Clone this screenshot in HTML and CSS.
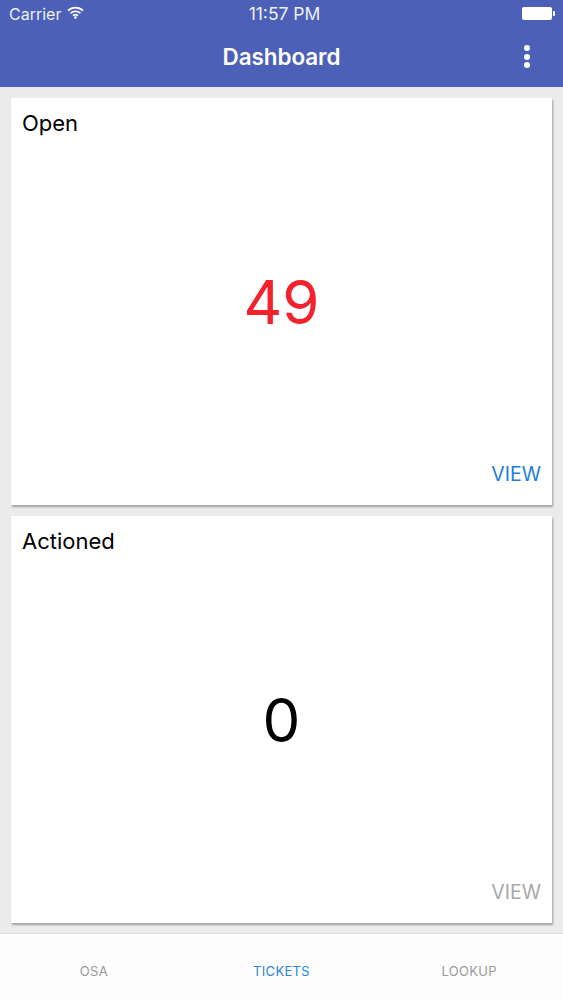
FILE: index.html
```html
<!DOCTYPE html>
<html lang="en">
<head>
<meta charset="utf-8">
<title>Dashboard</title>
<link rel="stylesheet" href="styles.css">
</head>
<body>
<div class="app">
  <header class="header">
    <div class="status">
      <div class="status-left">
        <span>Carrier</span>
        <svg class="wifi" width="17" height="13" viewBox="0 0 17 13"><path d="M1 4.600C5.300.6 11.700.6 16 4.600" class="arc"/><path d="M3.600 7.200c2.900-2.600 6.900-2.600 9.800 0" class="arc"/><path d="M6 9.600c1.500-1.200 3.500-1.200 5 0" class="arc"/><circle cx="8.500" cy="11.500" r="1.300" class="dot"/></svg>
      </div>
      <div class="status-time">11:57 PM</div>
      <div class="status-right">
        <span class="battery"></span><span class="battery-tip"></span>
      </div>
    </div>
    <div class="titlebar">
      <h1 class="title">Dashboard</h1>
      <div class="more"><i></i><i></i><i></i></div>
    </div>
  </header>
  <main class="cards">
    <section class="card">
      <h2 class="card-title">Open</h2>
      <div class="card-value red">49</div>
      <div class="card-action"><span class="view active">VIEW</span></div>
    </section>
    <section class="card">
      <h2 class="card-title">Actioned</h2>
      <div class="card-value">0</div>
      <div class="card-action"><span class="view">VIEW</span></div>
    </section>
  </main>
  <nav class="tabs">
    <div class="tab">OSA</div>
    <div class="tab active">TICKETS</div>
    <div class="tab">LOOKUP</div>
  </nav>
</div>
</body>
</html>
```
FILE: styles.css
```css
* { box-sizing: border-box; }
html, body { margin: 0; height: 100%; }
body { font-family: Inter, "Liberation Sans", sans-serif; background: #ebebeb; color: #000; }
.app { width: 563px; height: 1000px; display: flex; flex-direction: column; overflow: hidden; }
.header { height: 87px; background: #4b60b6; color: #fff; flex: none; }
.status { height: 29px; padding: 0 8px 2px 9px; display: grid; grid-template-columns: 1fr auto 1fr; align-items: center; font-size: 16px; color: #eef0f8; }
.status-left { display: flex; align-items: center; gap: 6px; }
.status-time { font-size: 17.5px; font-weight: 400; margin-left: 5px; }
.status-right { display: flex; align-items: center; justify-content: flex-end; }
.wifi { margin-top: -3px; }
.arc { fill: none; stroke: #fff; stroke-width: 1.7; }
.dot { fill: #fff; }
.battery { width: 30px; height: 13px; background: #fff; border-radius: 2px; }
.battery-tip { width: 2px; height: 5px; background: #fff; margin-left: 1px; border-radius: 0 1px 1px 0; }
.titlebar { height: 58px; display: flex; align-items: center; justify-content: center; position: relative; padding-bottom: 4px; }
.title { margin: 0; font-size: 22.5px; font-weight: 600; letter-spacing: -.1px; }
.more { position: absolute; right: 33px; top: 16px; display: flex; flex-direction: column; gap: 2.5px; }
.more i { width: 6px; height: 6px; background: #fff; border-radius: 50%; display: block; }
.cards { flex: 1; padding: 11px 11px 10px; display: flex; flex-direction: column; gap: 11px; }
.card { flex: 1; background: #fff; box-shadow: 1px 2px 2px rgba(0,0,0,.32); display: flex; flex-direction: column; padding: 11px 11px 19px; }
.card-title { margin: 0; font-size: 22px; font-weight: 400; line-height: 28px; }
.card-value { flex: 1; display: flex; align-items: center; justify-content: center; font-size: 60px; padding-top: 4px; }
.red { color: #f5222d; }
.card-action { display: flex; justify-content: flex-end; }
.view { font-size: 19.5px; line-height: 24px; color: #a8a8a8; }
.view.active { color: #1b7fd8; }
.tabs { height: 67px; flex: none; background: #fdfdfd; border-top: 1px solid #dedede; display: grid; grid-template-columns: repeat(3, 1fr); align-items: center; padding-top: 7px; }
.tab { text-align: center; font-size: 13px; letter-spacing: .3px; color: #9a9a9a; }
.tab.active { color: #2a85d8; }
```
